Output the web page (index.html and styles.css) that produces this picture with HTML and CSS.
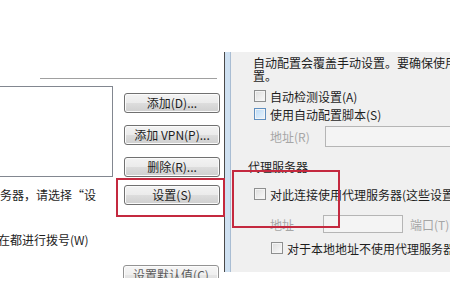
FILE: index.html
```html
<!DOCTYPE html>
<html>
<head>
<meta charset="utf-8">
<link rel="stylesheet" href="styles.css">
</head>
<body>
<div class="screen">
  <div class="left">
    <div class="sep"></div>
    <div class="mid">
      <div class="listbox"></div>
      <div class="btns">
        <div class="btn">添加(D)...</div>
        <div class="btn">添加 VPN(P)...</div>
        <div class="btn">删除(R)...</div>
      </div>
    </div>
    <div class="row-set">
      <div class="hint">务器，请选择“设</div>
      <div class="btn">设置(S)</div>
      <div class="redbox red1"></div>
    </div>
    <div class="dial">在都进行拨号(W)</div>
    <div class="bottom"><div class="btn faded">设置默认值(C)</div></div>
  </div>
  <div class="right">
    <div class="topwhite"></div>
    <div class="dialog">
      <div class="frame"></div>
      <div class="content">
        <div class="para">自动配置会覆盖手动设置。要确保使用</div>
        <div class="para para2">置。</div>
        <div class="cbrow r1"><span class="cb"></span><span>自动检测设置(A)</span></div>
        <div class="cbrow r2"><span class="cb blue"></span><span>使用自动配置脚本(S)</span></div>
        <div class="addr r3"><span class="dis lbl1">地址(R)</span><span class="tb tb1"></span></div>
        <div class="group">代理服务器</div>
        <div class="cbrow r4"><span class="cb"></span><span>对此连接使用代理服务器(这些设置</span></div>
        <div class="addr r5"><span class="dis lbl2">地址</span><span class="tb tb2"></span><span class="dis port">端口(T)</span></div>
        <div class="cbrow r6"><span class="cb"></span><span>对于本地地址不使用代理服务器</span></div>
        <div class="redbox red2"></div>
      </div>
    </div>
  </div>
</div>
</body>
</html>
```
FILE: styles.css
```css
* { box-sizing: border-box; }
html, body { margin: 0; padding: 0; }
body {
  width: 450px;
  height: 300px;
  overflow: hidden;
  background: #ffffff;
  font-family: "Noto Sans CJK SC", "Noto Sans", sans-serif;
  font-size: 12px;
  color: #1e1e1e;
}
.screen { display: flex; width: 450px; height: 300px; }

/* left dialog */
.left { width: 224px; flex: none; display: flex; flex-direction: column; position: relative; }
.sep { margin-top: 78px; margin-left: 40px; width: 177px; height: 1px; background: #a0a0a0; }
.mid { margin-top: 7px; display: flex; }
.listbox { margin-left: -1px; width: 114px; height: 91px; border: 1px solid #828790; background: #fff; flex: none; }
.btns { margin-left: 11px; padding-top: 7px; display: flex; flex-direction: column; gap: 12px; }
.btn {
  width: 96px;
  height: 20px;
  flex: none;
  border: 1px solid #707070;
  border-radius: 3px;
  background: linear-gradient(#f3f3f3 0%, #ebebeb 50%, #dddddd 51%, #cfcfcf 100%);
  box-shadow: inset 0 0 0 1px #fbfbfb;
  display: flex;
  align-items: center;
  justify-content: center;
  line-height: 1;
  white-space: nowrap;
  overflow: hidden;
  color: #1e1e1e;
}
.row-set { margin-top: 8px; display: flex; align-items: center; position: relative; }
.hint { width: 124px; flex: none; line-height: 14px; white-space: nowrap; }
.redbox { position: absolute; border: 2px solid #c4293f; }
.red1 { left: 116px; top: -7px; width: 109px; height: 39px; }
.dial { margin-top: 28px; line-height: 14px; white-space: nowrap; margin-left: -2px; }
.bottom { margin-top: 18px; margin-left: 123px; height: 13px; overflow: hidden; }
.faded { opacity: 0.75; }

/* right dialog */
.right { width: 226px; flex: none; display: flex; flex-direction: column; min-width: 0; }
.topwhite { height: 52px; flex: none; }
.dialog { height: 220px; flex: none; display: flex; min-width: 0; }
.frame {
  width: 7px;
  flex: none;
  border-left: 1px solid #4a4a4a;
  border-right: 1px solid #a9bdd3;
  background: #cfe1f2;
}
.content {
  flex: 1;
  min-width: 0;
  background: #f0f0f0;
  padding-left: 22px;
  padding-top: 4px;
  position: relative;
  display: flex;
  flex-direction: column;
  white-space: nowrap;
}
.para { line-height: 14px; height: 14px; }
.para2 { margin-top: -1px; }
.cbrow { display: flex; align-items: center; height: 16px; gap: 4px; padding-left: 1px; }
.cb {
  width: 12px;
  height: 12px;
  border: 1px solid #8e8f8f;
  background: linear-gradient(135deg, #dcdcdc, #fbfbfb);
  box-shadow: inset 0 0 0 1px #f4f4f4;
  flex: none;
}
.cb.blue { border-color: #5f8fc0; background: linear-gradient(135deg, #b9d9f5, #eaf4fd); }
.r1 { margin-top: 5px; }
.r2 { margin-top: 2px; }
.addr { display: flex; align-items: center; padding-left: 17px; }
.r3 { margin-top: 4px; height: 21px; }
.dis { color: #a6a6a6; }
.lbl1 { width: 55px; flex: none; }
.lbl2 { width: 53px; flex: none; }
.tb { height: 100%; border: 1px solid #b5b5b5; background: #f4f4f4; flex: none; }
.tb1 { width: 140px; }
.tb2 { width: 80px; }
.port { margin-left: 7px; }
.group { margin-top: 13px; line-height: 14px; margin-left: -5px; }
.r4 { margin-top: 12px; }
.r5 { margin-top: 13px; height: 18px; }
.r6 { margin-top: 7px; padding-left: 18px; }
.red2 { left: 1px; top: 118px; width: 108px; height: 58px; }
```
